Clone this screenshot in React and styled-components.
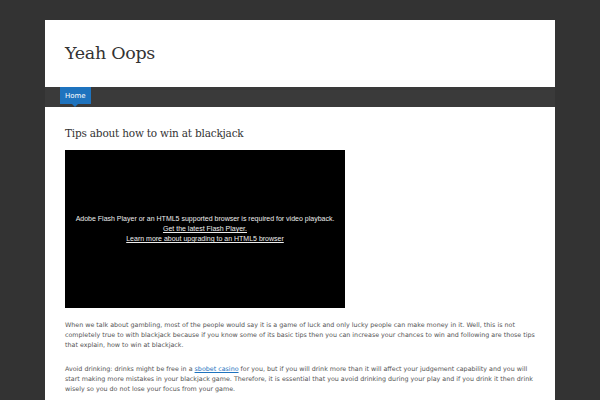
import React from 'react'
import styled, { createGlobalStyle } from 'styled-components'

const GlobalStyle = createGlobalStyle`
  html, body {
    margin: 0;
    padding: 0;
    background: #333333;
  }
`

const Page = styled.div`
  width: 600px;
  height: 400px;
  overflow: hidden;
  padding-top: 20px;
  box-sizing: border-box;
`

const Wrapper = styled.div`
  width: 510px;
  margin: 0 auto;
  background: #fff;
`

const Header = styled.header`
  height: 67px;
  padding: 0 20px;
  display: flex;
  align-items: center;
`

const SiteTitle = styled.h1`
  margin: 0 0 2px;
  font-family: 'DejaVu Serif', serif;
  font-weight: normal;
  font-size: 17.5px;
  color: #333;
  letter-spacing: -0.3px;
`

const Nav = styled.nav`
  height: 20px;
  background: #3a3a3a;
  padding: 0 15px;
  display: flex;
`

const NavItem = styled.a`
  position: relative;
  display: flex;
  align-items: center;
  padding: 0 5px;
  height: 17px;
  background: #1e73be;
  color: #fff;
  font-family: 'DejaVu Sans', sans-serif;
  font-size: 7px;
  &::after {
    content: '';
    position: absolute;
    left: 50%;
    bottom: -3px;
    margin-left: -3px;
    border-left: 3px solid transparent;
    border-right: 3px solid transparent;
    border-top: 3px solid #1e73be;
  }
`

const Content = styled.main`
  padding: 20px 20px 20px;
`

const PostTitle = styled.h2`
  margin: 0 0 11px;
  font-family: 'DejaVu Serif', serif;
  font-weight: normal;
  font-size: 10.5px;
  color: #333;
  letter-spacing: -0.2px;
`

const Video = styled.div`
  width: 280px;
  height: 158px;
  background: #000;
  display: flex;
  flex-direction: column;
  align-items: center;
  justify-content: center;
  font-family: 'Liberation Sans', Arial, sans-serif;
  font-size: 7px;
  line-height: 10px;
  color: #eee;
  margin-bottom: 12px;
`

const VideoLink = styled.a`
  color: #eee;
  text-decoration: underline;
`

const Paragraph = styled.p`
  margin: 0 0 14px;
  font-family: 'DejaVu Sans', sans-serif;
  font-size: 6.35px;
  line-height: 10px;
  color: #555;
`

const TextLink = styled.a`
  color: #1e73be;
  text-decoration: underline;
`

export default function App() {
  return (
    <Page>
      <GlobalStyle />
      <Wrapper>
        <Header>
          <SiteTitle>Yeah Oops</SiteTitle>
        </Header>
        <Nav>
          <NavItem>Home</NavItem>
        </Nav>
        <Content>
          <PostTitle>Tips about how to win at blackjack</PostTitle>
          <Video>
            <span>Adobe Flash Player or an HTML5 supported browser is required for video playback.</span>
            <VideoLink>Get the latest Flash Player.</VideoLink>
            <VideoLink>Learn more about upgrading to an HTML5 browser</VideoLink>
          </Video>
          <Paragraph>
            When we talk about gambling, most of the people would say it is a game of luck and only lucky people can make money in it. Well, this is not completely true to with blackjack because if you know some of its basic tips then you can increase your chances to win and following are those tips that explain, how to win at blackjack.
          </Paragraph>
          <Paragraph>
            Avoid drinking: drinks might be free in a <TextLink>sbobet casino</TextLink> for you, but if you will drink more than it will affect your judgement capability and you will start making more mistakes in your blackjack game. Therefore, it is essential that you avoid drinking during your play and if you drink it then drink wisely so you do not lose your focus from your game.
          </Paragraph>
        </Content>
      </Wrapper>
    </Page>
  )
}
